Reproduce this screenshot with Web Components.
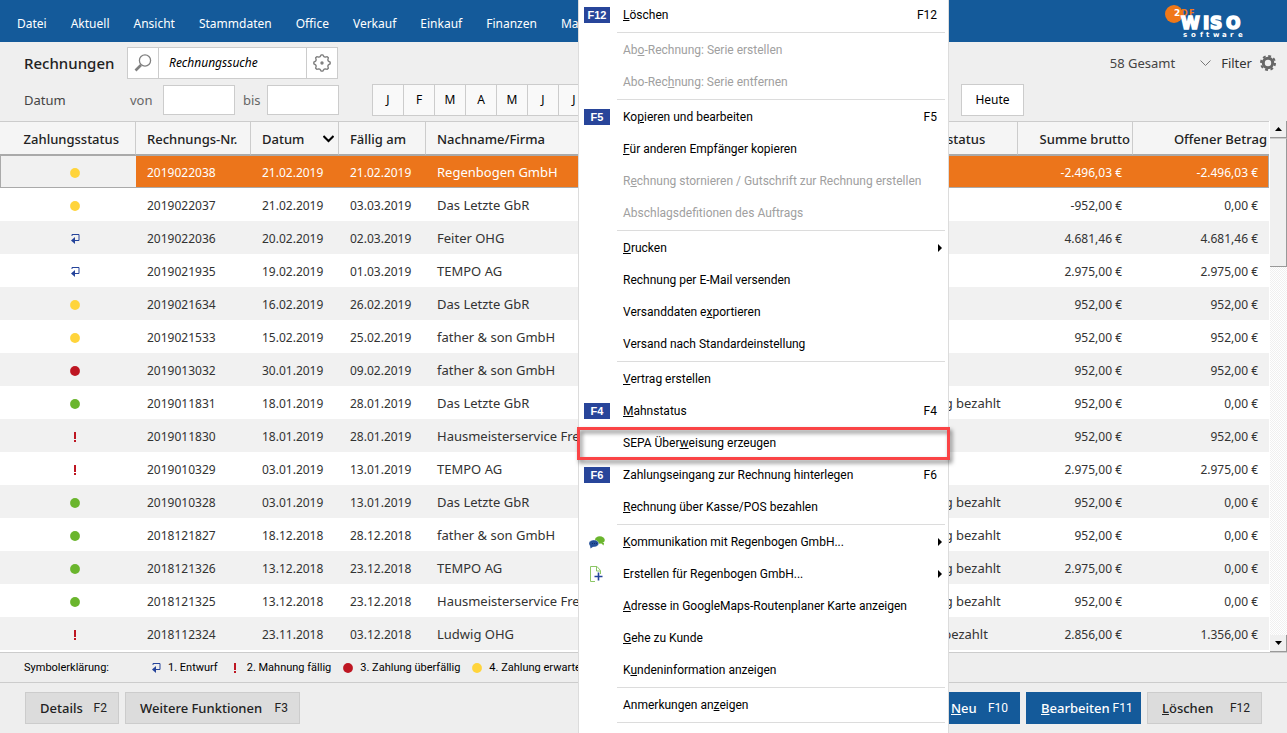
<!DOCTYPE html>
<html lang="de">
<head>
<meta charset="utf-8">
<title>Rechnungen</title>
<style>
  html, body { height: 100%; margin: 0; }
  body { font: 13px/18px "Noto Sans", "Open Sans", sans-serif; color: #222; background: #eee; overflow: hidden; }
</style>
</head>
<body>
<invoice-app></invoice-app>

<script>
const define = (name, html, setup) => {
  const tpl = document.createElement('template');
  tpl.innerHTML = html;
  customElements.define(name, class extends HTMLElement {
    constructor() {
      super();
      this.attachShadow({ mode: 'open' }).append(tpl.content.cloneNode(true));
    }
    connectedCallback() { if (setup) setup.call(this, this.shadowRoot); }
  });
};

/* Payment status symbols */
const SYMBOLS = {
  yellow: '<circle cx="5" cy="5" r="4.9" fill="#ffd43b"/>',
  red: '<circle cx="5" cy="5" r="4.9" fill="#be1622"/>',
  green: '<circle cx="5" cy="5" r="4.9" fill="#6ab52d"/>',
  due: '<path d="M4 0h2v7H4zM4 8h2v2H4z" fill="#be1622"/>',
  draft: '<path d="M2 2V.5h7v6H5" fill="none" stroke="#24439a"/><path d="M5 3v7L1 6.500z" fill="#24439a"/>'
};
define('status-symbol', `
  <style>:host{display:inline-block;width:10px;height:10px;flex:none} svg{display:block}</style>
  <svg width="10" height="10" viewBox="0 0 10 10" aria-hidden="true"></svg>`,
  function (root) { root.querySelector('svg').innerHTML = SYMBOLS[this.getAttribute('kind')]; });

define('wiso-logo', `
  <style>:host{display:block;width:82px;height:42px} svg{display:block}</style>
  <svg width="82" height="42" viewBox="0 0 82 42" font-family="DejaVu Sans, sans-serif" font-weight="bold">
    <circle cx="10" cy="14" r="9" fill="#f07818"/>
    <text x="10" y="16" font-size="9" fill="#fff">2</text>
    <text x="17 25" y="16" font-size="8" fill="#f07818">DF</text>
    <text x="17 39 46 62" y="29" font-size="17" fill="#fff" stroke="#fff" stroke-width="1.6">WISO</text>
    <text x="19 27 36 42 49 58 66 74" y="37" font-size="7" fill="#fff">software</text>
  </svg>`);

define('main-nav', `
  <style>
    :host{display:flex;height:42px;background:#145a9a;justify-content:space-between;padding:0 41px 0 17px}
    nav{display:flex;align-items:center;gap:24px;padding-top:4px}
  </style>
  <nav><slot></slot></nav><wiso-logo></wiso-logo>`);
define('nav-link', `
  <style>:host{display:block} a{color:#fff;text-decoration:none;white-space:nowrap;font-size:12px}</style>
  <a href="#"><slot></slot></a>`);

define('filter-bar', `
  <style>
    :host{display:block;height:79px;background:#efefef}
    .row{display:flex;align-items:center;height:42px}
    .row + .row{height:32px}
    h1{font-size:15px;line-height:24px;font-weight:500;margin:0 0 0 24px;width:103px}
    .search{display:flex;height:30px;border:1px solid #ccc;background:#fff}
    .search button,.search input{border:0;background:none;padding:0;margin:0}
    .search button{width:30px;display:grid;place-items:center}
    .search input{width:149px;box-sizing:border-box;padding:0 10px;border:solid #ccc;border-width:0 1px;font:italic 12px/18px "Noto Sans",sans-serif}
    .search input::placeholder{color:#000;opacity:1}
    .info{margin-left:auto;display:flex;align-items:center;padding-right:11px}
    .info span{margin-right:25px;color:#444}
    .info button{border:0;background:none;padding:0;display:flex;align-items:center;gap:10px;font:inherit;color:#333}
    .info .gear{margin-left:8px}
    label{color:#444}
    .date{display:flex;align-items:center}
    .date label{color:#666}
    .date input{width:72px;height:30px;box-sizing:border-box;border:1px solid #ccc;background:#fff;padding:0 4px;font:inherit}
    .months{display:flex;margin-left:33px;border:solid #ccc;border-width:1px 0 1px 1px}
    .months button{width:31px;height:30px;box-sizing:border-box;border:0;border-right:1px solid #ccc;background:#f9f9f9;padding:0;font:12px/18px "Noto Sans",sans-serif;color:#000}
    .today{margin-left:auto;margin-right:263px;width:63px;height:32px;border:1px solid #ccc;background:#fff;padding:0;font:12px/18px "Noto Sans",sans-serif;color:#000}
  </style>
  <div class="row">
    <h1>Rechnungen</h1>
    <div class="search">
      <button aria-label="Suchen"><svg width="18" height="18" viewBox="0 0 18 18" fill="none" stroke="#808080"><circle cx="11" cy="6.500" r="5.600" stroke-width="1.300"/><path d="M7 11L1.500 16.500" stroke-width="2.600"/></svg></button>
      <input type="text" placeholder="Rechnungssuche" aria-label="Rechnungssuche">
      <button aria-label="Sucheinstellungen"><svg width="18" height="18" viewBox="0 0 18 18" fill="none" stroke="#808080" stroke-width="1.400"><path id="g" stroke-linejoin="round"/><circle cx="9" cy="9" r="1" fill="#808080"/></svg></button>
    </div>
    <div class="info">
      <span>58 Gesamt</span>
      <button><svg width="11" height="7" viewBox="0 0 11 7" fill="none" stroke="#777"><path d="M.5.5l5 5 5-5"/></svg>Filter</button>
      <button class="gear" aria-label="Filter einstellen"><svg width="16" height="16" viewBox="0 0 16 16"><circle cx="8" cy="8" r="4.700" fill="none" stroke="#666" stroke-width="3"/><circle cx="8" cy="8" r="7" fill="none" stroke="#666" stroke-width="2" stroke-dasharray="2.900 2.600"/></svg></button>
    </div>
  </div>
  <div class="row">
    <label for="von" style="margin-left:24px;width:106px">Datum</label>
    <div class="date"><label for="von" style="width:33px">von</label><input id="von" type="text"><label for="bis" style="width:24px;margin-left:8px">bis</label><input id="bis" type="text"></div>
    <div class="months"></div>
    <button class="today">Heute</button>
  </div>`,
  function (root) {
    let d = '';
    for (let i = 0; i < 32; i++) {
      const r = i % 4 < 2 ? 8.2 : 6.6, a = (i - .5) * Math.PI / 16;
      d += (i ? 'L' : 'M') + (9 + r * Math.cos(a)).toFixed(2) + ' ' + (9 + r * Math.sin(a)).toFixed(2);
    }
    root.querySelector('#g').setAttribute('d', d + 'Z');
    root.querySelector('.months').innerHTML = [...'JFMAMJJASOND'].map(m => `<button>${m}</button>`).join('');
  });

const ROWS = `yellow|2019022038|21.02.2019|21.02.2019|Regenbogen GmbH||-2.496,03|-2.496,03
yellow|2019022037|21.02.2019|03.03.2019|Das Letzte GbR||-952,00|0,00
draft|2019022036|20.02.2019|02.03.2019|Feiter OHG||4.681,46|4.681,46
draft|2019021935|19.02.2019|01.03.2019|TEMPO AG||2.975,00|2.975,00
yellow|2019021634|16.02.2019|26.02.2019|Das Letzte GbR||952,00|952,00
yellow|2019021533|15.02.2019|25.02.2019|father &amp; son GmbH||952,00|952,00
red|2019013032|30.01.2019|09.02.2019|father &amp; son GmbH||952,00|952,00
green|2019011831|18.01.2019|28.01.2019|Das Letzte GbR|Vollständig bezahlt|952,00|0,00
due|2019011830|18.01.2019|28.01.2019|Hausmeisterservice Freund||952,00|952,00
due|2019010329|03.01.2019|13.01.2019|TEMPO AG||2.975,00|2.975,00
green|2019010328|03.01.2019|13.01.2019|Das Letzte GbR|Vollständig bezahlt|952,00|0,00
green|2018121827|18.12.2018|28.12.2018|father &amp; son GmbH|Vollständig bezahlt|952,00|0,00
green|2018121326|13.12.2018|23.12.2018|TEMPO AG|Vollständig bezahlt|2.975,00|0,00
green|2018121325|13.12.2018|23.12.2018|Hausmeisterservice Freund|Vollständig bezahlt|952,00|0,00
due|2018112324|23.11.2018|03.12.2018|Ludwig OHG|Teilweise bezahlt|2.856,00|1.356,00`;

define('invoice-table', `
  <style>
    :host{display:block;flex:1;min-width:0;background:#fff;padding-bottom:2px}
    table{width:100%;table-layout:fixed;border-collapse:separate;border-spacing:0}
    th{height:34px;box-sizing:border-box;padding:2px 10px 0 11px;border:solid #ccc;border-width:1px 1px 1px 0;border-bottom-color:#aaa;background:#f5f5f5;font-weight:500;text-align:left;white-space:nowrap}
    th:last-child{border-right:0}
    th:first-child{text-align:right;padding-right:16px}
    th.num{padding-right:2px;text-align:right}
    th.state{padding-left:8px}
    th svg{float:right;margin:5px -6px 0 0}
    td{height:33px;box-sizing:border-box;padding:2px 11px 0;white-space:nowrap;overflow:hidden;font-size:12px;color:#333}
    td.txt{font-size:13px;padding-top:0}
    td.state{padding-left:15px}
    td:first-child{padding:3px 0 0 13px;text-align:center;line-height:10px}
    td.num{text-align:right}
    tr:nth-child(odd) td{background:#f1f1f1}
    tr:first-child td{border:solid #aaa;border-width:1px 0;background:#ec751b;color:#fff}
    tr:first-child td:first-child{border-left-width:1px;background:#f1f1f1}
    tr:first-child td:last-child{border-right-width:1px;padding-right:10px}
  </style>
  <table>
    <colgroup><col style="width:136px"><col style="width:115px"><col style="width:88px"><col style="width:87px"><col><col style="width:148px"><col style="width:115px"><col style="width:136px"></colgroup>
    <thead><tr><th>Zahlungsstatus</th><th>Rechnungs-Nr.</th><th>Datum<svg width="11" height="8" viewBox="0 0 11 8" fill="none" stroke="#000" stroke-width="2"><path d="M.5 1l5 5 5-5"/></svg></th><th>Fällig am</th><th>Nachname/Firma</th><th class="state">Rechnungsstatus</th><th class="num">Summe brutto</th><th class="num">Offener Betrag</th></tr></thead>
    <tbody></tbody>
  </table>`,
  function (root) {
    root.querySelector('tbody').innerHTML = ROWS.split('\n').map(line => {
      const [s, nr, d1, d2, name, st, sum, open] = line.split('|');
      return `<tr><td><status-symbol kind="${s}"></status-symbol></td><td>${nr}</td><td>${d1}</td><td>${d2}</td><td class="txt">${name}</td><td class="txt state">${st}</td><td class="num">${sum} €</td><td class="num">${open} €</td></tr>`;
    }).join('');
  });

define('scroll-rail', `
  <style>
    :host{display:flex;flex-direction:column;width:17px;margin-left:1px;background:repeating-conic-gradient(#f0f0f0 0 25%,#fff 0 50%) 0 0/2px 2px}
    button,.thumb{box-sizing:border-box;width:17px;background:#f0f0f0;border:solid #999;border-width:0 1px 1px 0;padding:0}
    button{height:17px;display:grid;place-items:center}
    .thumb{height:129px;border-top:1px solid #ccc}
    .space{flex:1}
  </style>
  <button aria-label="Nach oben"><svg width="7" height="4"><path d="M0 4L3.500 0 7 4z"/></svg></button>
  <div class="thumb"></div><div class="space"></div>
  <button aria-label="Nach unten"><svg width="7" height="4"><path d="M0 0h7L3.500 4z"/></svg></button>`);

define('symbol-legend', `
  <style>
    :host{display:flex;align-items:center;height:29px;border:solid #ccc;border-width:1px 0;padding-left:24px;gap:12px;font:11px/18px Roboto,"Noto Sans",sans-serif;color:#000;white-space:nowrap}
    .title{width:115px}
    .item{display:flex;align-items:center;gap:7px}
  </style>
  <span class="title">Symbolerklärung:</span>
  <span class="item"><status-symbol kind="draft"></status-symbol>1. Entwurf</span>
  <span class="item"><status-symbol kind="due"></status-symbol>2. Mahnung fällig</span>
  <span class="item"><status-symbol kind="red"></status-symbol>3. Zahlung überfällig</span>
  <span class="item"><status-symbol kind="yellow"></status-symbol>4. Zahlung erwartet</span>`);

define('key-button', `
  <style>
    :host{display:block}
    button{width:100%;height:32px;box-sizing:border-box;display:flex;gap:3px;justify-content:space-between;align-items:center;border:1px solid #ccc;background:#dcdcdc;padding:0 11px 0 14px;font:500 13px/18px "Noto Sans",sans-serif;color:#222;white-space:nowrap}
    :host([primary]) button{background:#145a9a;border-color:#145a9a;color:#fff}
    kbd{font:12px/18px Roboto,"Noto Sans",sans-serif}
  </style>
  <button><span><slot></slot></span><kbd></kbd></button>`,
  function (root) { root.querySelector('kbd').textContent = this.getAttribute('key'); });

define('action-bar', `
  <style>
    :host{display:flex;gap:6px;padding:9px 25px}
    .gap{flex:1}
  </style>
  <key-button key="F2" style="width:94px">Details</key-button>
  <key-button key="F3" style="width:175px">Weitere Funktionen</key-button>
  <div class="gap"></div>
  <key-button primary key="F10" style="width:84px"><u>N</u>eu</key-button>
  <key-button primary key="F11" style="width:115px"><u>B</u>earbeiten</key-button>
  <key-button key="F12" style="width:115px"><u>L</u>öschen</key-button>`);

define('menu-entry', `
  <style>
    :host{display:block;position:relative}
    button{width:100%;height:32px;display:grid;grid-template-columns:39px 1fr auto;align-items:center;border:0;background:none;padding:0 11px 0 5px;text-align:left;font:12px/18px Roboto,"Noto Sans",sans-serif;color:#000;white-space:nowrap}
    button:disabled{color:#a0a0a0}
    .badge{width:26px;height:16px;background:#28459a;color:#fff;font:bold 11px/16px "Liberation Sans",sans-serif;text-align:center}
    .icon{width:26px;display:grid;place-items:center}
    .arrow{margin-right:-5px}
    svg{display:block}
    :host([marked])::after{content:"";position:absolute;inset:0 -2px -1px -2px;border:3px solid #fa4446;filter:drop-shadow(2px 3px 2px rgba(0,0,0,.5));pointer-events:none}
  </style>
  <button role="menuitem"><span class="lead"></span><span><slot></slot></span><span class="tail"></span></button>`,
  function (root) {
    const key = this.getAttribute('key'), icon = this.getAttribute('icon');
    const lead = root.querySelector('.lead'), tail = root.querySelector('.tail');
    root.querySelector('button').disabled = this.hasAttribute('disabled');
    if (key) { lead.classList.add('badge'); lead.textContent = tail.textContent = key; }
    if (icon) { lead.classList.add('icon'); lead.innerHTML = MENU_ICONS[icon]; }
    if (this.hasAttribute('submenu')) {
      tail.classList.add('arrow');
      tail.innerHTML = '<svg width="5" height="8"><path d="M1 0v8l4-4z"/></svg>';
    }
  });
const MENU_ICONS = {
  chat: '<svg width="16" height="13" viewBox="0 0 16 13"><ellipse cx="10.800" cy="4" rx="5" ry="3.700" fill="#6ab52d"/><path d="M12 7h3l-.5 2.500z" fill="#6ab52d"/><ellipse cx="4.800" cy="7.500" rx="4.900" ry="3.600" fill="#24509a" stroke="#fff" stroke-width=".4"/><path d="M1 9l.5 3.500L4.500 10.500z" fill="#24509a"/><path d="M3 7.500h1m1 0h1m1 0h1" stroke="#123070"/></svg>',
  create: '<svg width="16" height="17" viewBox="0 0 16 17" fill="none"><path d="M6 15.500H1.500V.5H8l3.500 4V8" stroke="#8cc665"/><path d="M7.500 1v4h4" stroke="#8cc665"/><path d="M9.500 6.500v8M5.500 10.500h8" stroke="#24439a" stroke-width="1.600"/></svg>'
};
define('menu-divider', `<style>:host{display:block;height:1px;margin:1px 3px 1px 38px;background:#dcdcdc}</style>`);

define('context-menu', `
  <style>:host{display:block;position:absolute;left:578px;top:-1px;bottom:0;width:371px;box-sizing:border-box;border:solid #dcdcdc;border-width:0 1px;background:#fff}</style>
  <div role="menu"><slot></slot></div>`);

define('invoice-app', `
  <style>
    :host{display:flex;flex-direction:column;min-height:100%;position:relative}
    .list{display:flex;background:#fff}
  </style>
  <main-nav>
    <nav-link>Datei</nav-link><nav-link>Aktuell</nav-link><nav-link>Ansicht</nav-link><nav-link>Stammdaten</nav-link><nav-link>Office</nav-link><nav-link>Verkauf</nav-link><nav-link>Einkauf</nav-link><nav-link>Finanzen</nav-link><nav-link>Marketing</nav-link>
  </main-nav>
  <filter-bar></filter-bar>
  <div class="list"><invoice-table></invoice-table><scroll-rail></scroll-rail></div>
  <symbol-legend></symbol-legend>
  <action-bar></action-bar>
  <context-menu>
    <menu-entry key="F12"><u>L</u>öschen</menu-entry>
    <menu-divider></menu-divider>
    <menu-entry disabled>Ab<u>o</u>-Rechnung: Serie erstellen</menu-entry>
    <menu-entry disabled>Abo-Rec<u>h</u>nung: Serie entfernen</menu-entry>
    <menu-divider></menu-divider>
    <menu-entry key="F5">Ko<u>p</u>ieren und bearbeiten</menu-entry>
    <menu-entry><u>F</u>ür anderen Empfänger kopieren</menu-entry>
    <menu-entry disabled>R<u>e</u>chnung stornieren / Gutschrift zur Rechnung erstellen</menu-entry>
    <menu-entry disabled>Abschlagsdefitionen des Auftrags</menu-entry>
    <menu-divider></menu-divider>
    <menu-entry submenu><u>D</u>rucken</menu-entry>
    <menu-entry>Rechnung per E-Mail versenden</menu-entry>
    <menu-entry>Versanddaten e<u>x</u>portieren</menu-entry>
    <menu-entry>Versand nach Standardeinstellung</menu-entry>
    <menu-divider></menu-divider>
    <menu-entry><u>V</u>ertrag erstellen</menu-entry>
    <menu-entry key="F4"><u>M</u>ahnstatus</menu-entry>
    <menu-entry marked>SEPA Über<u>w</u>eisung erzeugen</menu-entry>
    <menu-entry key="F6">Zahlungseingang zur Rechnung hinterlegen</menu-entry>
    <menu-entry><u>R</u>echnung über Kasse/POS bezahlen</menu-entry>
    <menu-divider></menu-divider>
    <menu-entry icon="chat" submenu><u>K</u>ommunikation mit Regenbogen GmbH...</menu-entry>
    <menu-entry icon="create" submenu>Erstellen für Regenbogen GmbH...</menu-entry>
    <menu-entry><u>A</u>dresse in GoogleMaps-Routenplaner Karte anzeigen</menu-entry>
    <menu-entry><u>G</u>ehe zu Kunde</menu-entry>
    <menu-entry>K<u>u</u>ndeninformation anzeigen</menu-entry>
    <menu-divider></menu-divider>
    <menu-entry>Anmerkungen an<u>z</u>eigen</menu-entry>
    <menu-divider></menu-divider>
  </context-menu>`);
</script>
</body>
</html>
